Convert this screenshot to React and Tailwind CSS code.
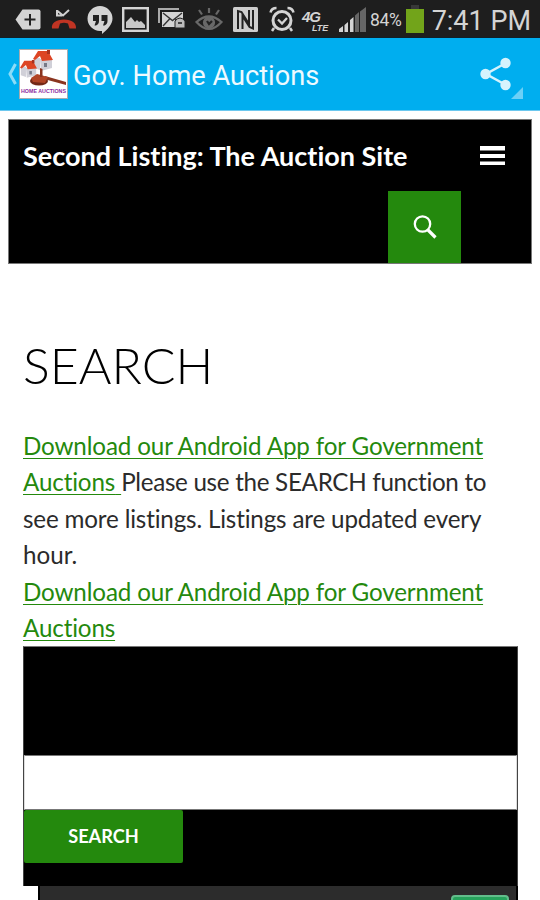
function StatusBar() {
  return (
    <div className="h-[38px] bg-[#1e1e1e] border-b border-[#10202a] flex items-center pl-[15px] pr-[9px] font-[Roboto,sans-serif] text-[#d4d4d4]">
      {/* Plus tag */}
      <svg className="w-[26px] h-[21px] shrink-0 mt-px" viewBox="0 0 26 21">
        <path d="M7.500 .5h16q2 0 2 2v16q0 2-2 2h-16L.5 10.500z" fill="#d4d4d4" />
        <path d="M15 5v11.500M9.500 10.500h11" stroke="#222" strokeWidth="2" />
      </svg>

      {/* Missed call */}
      <svg className="w-[26px] h-5 shrink-0 ml-2.5 mt-px" viewBox="0 0 26 20">
        <path d="M6 1v5.500h5M6.500 2l5.500 4.500L18 1" fill="none" stroke="#d0d0d0" strokeWidth="2" />
        <path d="M1 19.500c-.8-5.500 4-9 12-9s12.500 3.500 12 9h-6.500l-1.500-5c-3-.9-5-.9-8 0l-1.500 5z" fill="#c03423" />
      </svg>

      {/* Hangouts */}
      <svg className="w-[26px] h-[29px] shrink-0 ml-2.5 mt-[3px]" viewBox="0 0 26 29">
        <path d="M13 0a12.500 12.500 0 0 1 12.500 12.500c0 6-5 11-10.500 15.500V25h-2a12.500 12.500 0 0 1 0-25z" fill="#d4d4d4" />
        <path d="M6 9h6v6c0 2-1 3.500-3 4.500H7.500L9 15H6zM14.500 9h6v6c0 2-1 3.500-3 4.500H16l1.500-4.500h-3z" fill="#222" />
      </svg>

      {/* Gallery */}
      <svg className="w-[27px] h-[25px] shrink-0 ml-[9px] mt-[2px]" viewBox="0 0 27 25">
        <rect x="1.200" y="1.200" width="24.600" height="22.600" fill="none" stroke="#d4d4d4" strokeWidth="2.400" />
        <path d="M4 21v-6l5-5 4 5 2-2 2 2 2-1 4 4v3z" fill="#c8c8c8" />
      </svg>

      {/* Mail */}
      <svg className="w-[28px] h-[22px] shrink-0 ml-[9px] mt-px" viewBox="0 0 28 22">
        <path d="M1 15V1h20" fill="none" stroke="#aaa" strokeWidth="2" />
        <rect x="4" y="4" width="21" height="15" fill="#d4d4d4" />
        <path d="M5 5l9.500 7.500L24 5M5 18l7-7.500M24 18l-7-7.500" fill="none" stroke="#333" strokeWidth="1.400" />
        <path d="M17 13q5-6 10 0v7H17z" fill="#bbb" stroke="#222" />
        <path d="M20 15h4" stroke="#444" strokeWidth="2" />
      </svg>

      {/* Smart stay */}
      <svg className="w-[28px] h-[24px] shrink-0 ml-[9px] mt-[3px]" viewBox="0 0 28 24" fill="none" stroke="#686868" strokeWidth="2.200">
        <path d="M1.500 14q12.500-11 25 0-12.500 14-25 0z" />
        <circle cx="14" cy="14.500" r="5" fill="#686868" />
        <path d="M14 0v5M4 2l3 4.500M24 2l-3 4.500" />
        <path d="M12 13l2 3 3-3" stroke="#222" />
      </svg>

      {/* NFC */}
      <svg className="w-[25px] h-[25px] shrink-0 ml-[10px] mt-[2px]" viewBox="0 0 25 25">
        <rect width="25" height="25" rx="1.500" fill="#cecece" />
        <path d="M5 22V4l3.500 1 7.500 12V3M9.500 22V9l7 11 3.500 1.500V3" fill="none" stroke="#222" strokeWidth="2" />
      </svg>

      {/* Alarm */}
      <svg className="w-[26px] h-[27px] shrink-0 ml-[11px] mt-px" viewBox="0 0 26 27" fill="none" stroke="#d4d4d4">
        <circle cx="13" cy="14.500" r="9" strokeWidth="3" />
        <path d="M9 13.500l4 4 5-5.500" strokeWidth="2.300" />
        <path d="M1.500 6.500q1-4.500 6-4.500M24.500 6.500q-1-4.500-6-4.500M5 22l-2 3M21 22l2 3" strokeWidth="2.500" />
      </svg>

      {/* 4G LTE */}
      <div className="w-[31px] ml-[7px] mt-[5px] flex flex-col shrink-0 font-['Liberation_Sans',sans-serif] font-bold italic">
        <span className="text-[15px] leading-[15px] tracking-[-1px]">4G</span>
        <span className="ml-[10px] text-[9px] leading-[9px]">LTE</span>
      </div>

      {/* Signal */}
      <svg className="w-[27px] h-[25px] shrink-0 ml-[6px] mt-[2px]" viewBox="0 0 27 25" fill="#d4d4d4">
        <path d="M0 22l4-3v6H0zM5.500 18l3.500-3v10H5.500zM11 13l3.500-3v15H11z" />
        <path d="M16 8.500l4-3.500V25h-4zM21 4.500L27 0v25h-6z" fill="#666" />
      </svg>

      <span className="ml-[4px] w-[33px] text-[17.500px] tracking-[-0.3px] whitespace-nowrap mt-[3px]">84%</span>

      {/* Battery */}
      <svg className="w-[18px] h-[28px] shrink-0 ml-[3px] mt-px" viewBox="0 0 18 28">
        <rect x="5" width="8" height="4" fill="#383838" />
        <rect y="4" width="18" height="24" fill="#72a41a" />
      </svg>

      <span className="ml-[8px] text-[27px] leading-none whitespace-nowrap mt-[5px]">7:41 PM</span>
    </div>
  );
}

function House({ x, y, s }) {
  return (
    <g transform={`translate(${x} ${y}) scale(${s})`}>
      <path d="M1 8h6v12l-6-2zM7 9h12v9L8 21z" fill="#d0d0d8" />
      <path d="M5 1h10l5 9-11 1-2-5-5 4-2-1z" fill="#dd4524" />
      <path d="M14 0h3v4h-3z" fill="#a8321f" />
      <path d="M11 13h3v4h-3z" fill="#777b88" />
    </g>
  );
}

function AppLogo() {
  return (
    <svg className="w-[49px] h-[50px] shrink-0" viewBox="0 0 49 50">
      <rect x=".5" y=".5" width="48" height="49" fill="#fff" stroke="#a5abb0" />
      <House x={14} y={1} s={1} />
      <House x={1} y={11} s={0.85} />
      <path d="M26 27l21 6v3L25 30z" fill="#8a3520" />
      <ellipse cx="20" cy="32" rx="9" ry="4.500" fill="#722817" />
      <path d="M12 29l6-4 11 3-3 6-12-1z" fill="#b04426" />
      <path d="M21 19l2.500 1v8H21z" fill="#8a3520" />
      <text x="2" y="44" fontFamily="Liberation Sans, sans-serif" fontSize="5.500" fontWeight="bold" fill="#8b2aa0" textLength="45" lengthAdjust="spacingAndGlyphs">HOME AUCTIONS</text>
    </svg>
  );
}

function ActionBar() {
  return (
    <div className="h-[73px] bg-[#00aeef] border-b border-[#6cc8ef] flex items-center pl-[7px] pr-[17px]">
      <svg className="w-[10px] h-[22px] shrink-0" viewBox="0 0 10 22">
        <path d="M8.500 1L3 11l5.500 10" fill="none" stroke="#8bdcf8" strokeWidth="3" />
      </svg>
      <div className="ml-[2px]">
        <AppLogo />
      </div>
      <h1 className="ml-[5px] mt-[6px] font-[Roboto,sans-serif] text-[27.200px] leading-none text-[#eefaff] whitespace-nowrap">Gov. Home Auctions</h1>
      <svg className="w-[43px] h-[42px] ml-auto mt-[7px] shrink-0" viewBox="0 0 43 42">
        <path d="M26 6L6 17l20 11" fill="none" stroke="#d5f3fd" strokeWidth="2.500" />
        <g fill="#d5f3fd">
          <circle cx="25.500" cy="6" r="5.200" />
          <circle cx="5.500" cy="17" r="5.200" />
          <circle cx="25.500" cy="28" r="5.200" />
        </g>
        <path d="M43 30v12H31z" fill="#6bd0f7" />
      </svg>
    </div>
  );
}

function SiteHeader() {
  return (
    <header className="mx-2 mt-2 h-[145px] bg-black border border-[#777] text-white">
      <div className="h-[71px] flex items-center justify-between pl-[14px] pr-[26px]">
        <span className="mt-[2px] text-[27px] font-bold whitespace-nowrap">Second Listing: The Auction Site</span>
        <svg className="w-[25px] h-5" viewBox="0 0 25 20" fill="#fff">
          <path d="M0 0h25v4.500H0zM0 8h25v4H0zM0 15.500h25V19H0z" />
        </svg>
      </div>
      <div className="h-[72px] flex justify-end pr-[70px]">
        <button className="w-[73px] h-full bg-[#24890d] flex items-center justify-center">
          <svg className="w-6 h-6" viewBox="0 0 24 24" fill="none" stroke="#fff">
            <circle cx="9.500" cy="9" r="7.700" strokeWidth="2.300" />
            <path d="M14.500 14.500l8 8" strokeWidth="3.200" />
          </svg>
        </button>
      </div>
    </header>
  );
}

function DownloadLink() {
  return (
    <a href="#" className="text-[#24890d] underline decoration-1 underline-offset-[3px]">
      <span className="tracking-[-0.13px]">Download our Android App for Government</span>
      <br />
      <span className="tracking-[-0.15px]">Auctions{' '}</span>
    </a>
  );
}

export default function App() {
  return (
    <div className="w-[540px] h-[900px] overflow-hidden bg-white font-[Lato,sans-serif] [font-variant-ligatures:none]">
      <StatusBar />
      <ActionBar />
      <SiteHeader />

      <main className="pl-[23px] pr-[22px]">
        <h2 className="mt-[73px] text-[50px] leading-[56px] font-light text-black">SEARCH</h2>

        <div className="mt-[35px] text-[24.200px] leading-[36.400px] text-[#2b2b2b] whitespace-nowrap">
          <DownloadLink />
          <span className="tracking-[-0.3px]">Please use the SEARCH function to</span><br />
          <span className="tracking-[-0.16px]">see more listings. Listings are updated every</span><br />
          hour.<br />
          <DownloadLink />
        </div>

        <form className="h-[240px] bg-black border border-t-[#777] border-x-[#444] border-b-0 pt-[108px]">
          <input className="block w-full h-[55px] bg-white border border-[#777] border-x-[#ddd] outline-none" />
          <button type="button" className="block w-[159px] h-[53px] bg-[#24890d] rounded-[2px] text-white text-[18.200px] font-bold">SEARCH</button>
        </form>

        {/* Listing widget, continues below the fold */}
        <div className="ml-[15px] h-[40px] border-l-2 border-r-2 border-black bg-[#2c2c2c] flex justify-end pt-[9px] pr-[7px]">
          <div className="w-[58px] h-[30px] rounded-[4px] border-2 border-[#62bd8b] bg-[#27a35c]" />
        </div>
      </main>
    </div>
  );
}
